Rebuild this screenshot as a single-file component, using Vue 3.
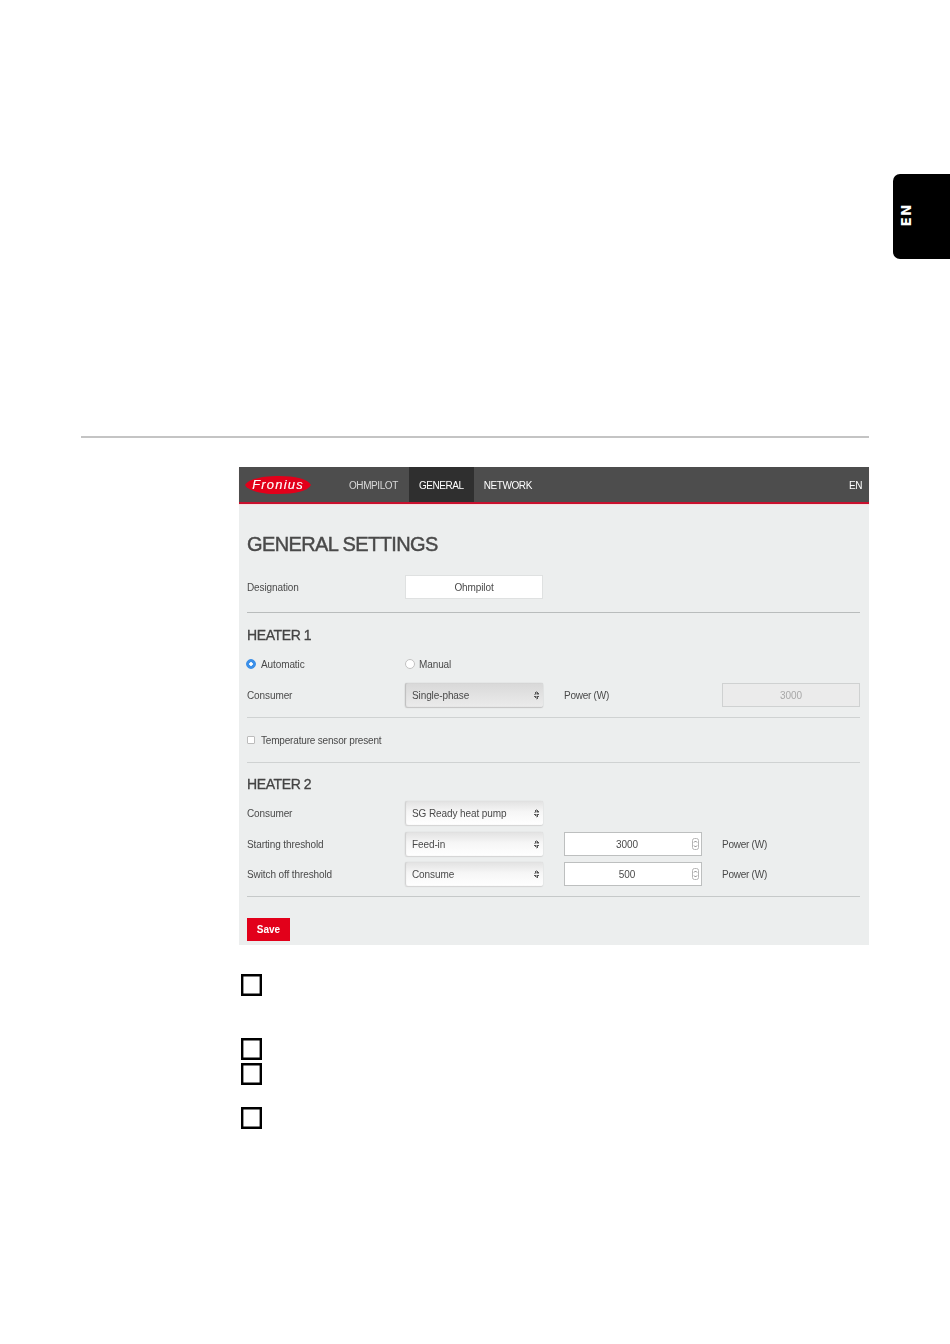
<script setup>
const steps = [
  { id: 1, gap: 42.5 },
  { id: 2, gap: 3.5 },
  { id: 3, gap: 22.5 },
  { id: 4, gap: 0 },
]
</script>

<template>
  <div class="page">
    <div class="lang-tab"><span>EN</span></div>
    <hr class="rule" />
    <section class="shot">
      <header class="nav">
        <svg class="logo" width="66" height="18" viewBox="0 0 66 18">
          <path d="M0 9C3 3 18 0 34 0C50 0 63 3 66 9C63 15 50 18 33 18C17 18 3 15 0 9Z" fill="#e2001a" />
          <text x="33" y="13" text-anchor="middle" fill="#fff" stroke="#fff" stroke-width="0.15" font-family="Liberation Sans, sans-serif" font-size="13" font-style="italic" letter-spacing="1.2">Fronius</text>
        </svg>
        <a class="tab first">OHMPILOT</a>
        <a class="tab active">GENERAL</a>
        <a class="tab">NETWORK</a>
        <span class="lang">EN</span>
      </header>
      <div class="body">
        <h1>GENERAL SETTINGS</h1>
        <div class="row designation">
          <label>Designation</label>
          <div class="input">Ohmpilot</div>
        </div>
        <div class="line l1"></div>
        <h2 class="h-one">HEATER 1</h2>
        <div class="row radios">
          <label class="opt"><i class="radio on"></i>Automatic</label>
          <label class="opt"><i class="radio"></i>Manual</label>
        </div>
        <div class="row consumer">
          <label>Consumer</label>
          <div class="select dark">Single-phase<i class="arrows"></i></div>
          <label class="unit">Power (W)</label>
          <div class="input disabled">3000</div>
        </div>
        <div class="line l2"></div>
        <label class="opt check-row"><i class="check"></i>Temperature sensor present</label>
        <div class="line l3"></div>
        <h2 class="h-two">HEATER 2</h2>
        <div class="row r1">
          <label>Consumer</label>
          <div class="select">SG Ready heat pump<i class="arrows"></i></div>
        </div>
        <div class="row r2">
          <label>Starting threshold</label>
          <div class="select">Feed-in<i class="arrows"></i></div>
          <div class="input num">
            3000
            <svg class="spin" width="7" height="12" viewBox="0 0 7 12">
              <rect x="0.5" y="0.5" width="6" height="11" rx="2" fill="#fff" stroke="#b5b5b5" />
              <path d="M2 4.5L3.5 3L5 4.5M2 7.5L3.5 9L5 7.5" fill="none" stroke="#666" stroke-width="0.8" />
            </svg>
          </div>
          <label class="unit">Power (W)</label>
        </div>
        <div class="row r3">
          <label>Switch off threshold</label>
          <div class="select">Consume<i class="arrows"></i></div>
          <div class="input num">
            500
            <svg class="spin" width="7" height="12" viewBox="0 0 7 12">
              <rect x="0.5" y="0.5" width="6" height="11" rx="2" fill="#fff" stroke="#b5b5b5" />
              <path d="M2 4.5L3.5 3L5 4.5M2 7.5L3.5 9L5 7.5" fill="none" stroke="#666" stroke-width="0.8" />
            </svg>
          </div>
          <label class="unit">Power (W)</label>
        </div>
        <div class="line l4"></div>
        <button class="save">Save</button>
      </div>
    </section>
    <div class="steps">
      <div v-for="s in steps" :key="s.id" class="step" :style="{ marginBottom: s.gap + 'px' }"></div>
    </div>
  </div>
</template>

<style>
html, body { margin: 0; background: #fff; }
</style>

<style scoped>
.page {
  position: relative;
  width: 950px;
  height: 1344px;
  overflow: hidden;
  background: #fff;
  font-family: "Liberation Sans", Arial, sans-serif;
  padding-top: 436px;
  box-sizing: border-box;
}
.lang-tab {
  position: absolute;
  left: 893px;
  top: 174px;
  width: 57px;
  height: 85px;
  background: #000;
  border-radius: 7px 0 0 7px;
}
.lang-tab span {
  position: absolute;
  left: 13px;
  top: 41px;
  width: 0;
  height: 0;
  display: flex;
  align-items: center;
  justify-content: center;
  transform: rotate(-90deg);
  color: #fff;
  font-family: "DejaVu Sans", sans-serif;
  font-weight: 700;
  font-size: 13.7px;
  letter-spacing: 1px;
  white-space: nowrap;
}
.rule {
  margin: 0 81px;
  border: 0;
  height: 2px;
  background: #c4c4c4;
}
.shot {
  margin: 29px 0 0 239px;
  width: 630px;
  height: 478px;
  background: #eceeee;
  color: #4a4a4a;
  font-size: 10px;
  letter-spacing: -0.1px;
  filter: blur(0.3px);
}
.nav {
  height: 35px;
  display: flex;
  align-items: stretch;
  background: #4d4d4d;
  border-bottom: 2px solid #c8102e;
  box-shadow: 0 1px 1px #f5dede;
  letter-spacing: -0.42px;
}
.logo {
  align-self: center;
  margin-left: 6px;
  margin-top: 1px;
  flex: none;
}
.tab {
  display: flex;
  align-items: center;
  padding: 1px 10px 0;
  color: #fff;
}
.tab.first {
  margin-left: 28px;
  color: #d8d8d8;
  padding-right: 11px;
}
.tab.active {
  background: #2f2f2f;
}
.lang {
  margin-left: auto;
  margin-right: 7px;
  margin-top: 1px;
  align-self: center;
  color: #fff;
}
.body {
  padding: 0 9px 0 8px;
}
h1 {
  margin: 0;
  padding-top: 28px;
  height: 40px;
  line-height: 24px;
  box-sizing: content-box;
  font-size: 20px;
  font-weight: 400;
  -webkit-text-stroke: 0.45px #4a4a4a;
  color: #4a4a4a;
  letter-spacing: -0.6px;
}
h2 {
  margin: 0;
  font-size: 14px;
  line-height: 18px;
  font-weight: 400;
  -webkit-text-stroke: 0.3px #444;
  color: #444;
  letter-spacing: -0.4px;
}
.row {
  display: grid;
  grid-template-columns: 158px 159px 158px 138px;
  align-items: center;
}
.opt {
  display: flex;
  align-items: center;
}
.unit {
  letter-spacing: -0.25px;
}
.designation { height: 24px; margin-top: 3px; }
.line {
  height: 1px;
  background: #b9bcbc;
}
.l1 { margin-top: 13px; }
.h-one { margin-top: 13px; }
.radios { margin-top: 13px; height: 14px; }
.consumer { margin-top: 12px; height: 24px; }
.l2 { margin-top: 10px; background: #cfd2d2; }
.check-row { margin-top: 15px; height: 14px; letter-spacing: -0.18px; }
.l3 { margin-top: 15px; background: #cfd2d2; }
.h-two { margin-top: 12px; }
.r1 { margin-top: 8px; height: 24px; }
.r2 { margin-top: 7px; height: 24px; }
.r3 { margin-top: 6px; height: 24px; }
.l4 { margin-top: 10px; background: #c6c9c9; }
.input {
  width: 138px;
  height: 24px;
  box-sizing: border-box;
  background: #fff;
  border: 1px solid #dfe1e1;
  display: flex;
  align-items: center;
  justify-content: center;
  position: relative;
}
.input.disabled {
  background: #ebebeb;
  border-color: #cfd1d1;
  color: #a8a8a8;
}
.input.num {
  border-color: #bdbfbf;
  padding-right: 12px;
}
.select {
  width: 138px;
  height: 24px;
  box-sizing: border-box;
  padding-left: 7px;
  display: flex;
  align-items: center;
  position: relative;
  border-radius: 2px;
  background: linear-gradient(#e2e2e2, #f6f6f6 45%, #fff);
  box-shadow: inset 1px 0 1px #cfcfcf, 0 1px 1px #d4d4d4, 0 0 1px #c4c4c4;
}
.select.dark {
  background: linear-gradient(#d8d8d8, #e2e2e2 50%, #ebebeb);
  box-shadow: inset 1px 0 1px #bdbdbd, 0 1px 1px #c4c4c4, 0 0 1px #aaa;
}
.arrows {
  position: absolute;
  right: 4px;
  top: 8px;
  width: 5px;
  height: 9px;
  background:
    linear-gradient(to bottom right, transparent 50%, #555 50%) 0 0 / 2.5px 3.5px no-repeat,
    linear-gradient(to bottom left, transparent 50%, #555 50%) 2.5px 0 / 2.5px 3.5px no-repeat,
    linear-gradient(to top right, transparent 50%, #555 50%) 0 5px / 2.5px 3.5px no-repeat,
    linear-gradient(to top left, transparent 50%, #555 50%) 2.5px 5px / 2.5px 3.5px no-repeat;
}
.spin {
  position: absolute;
  right: 2px;
  top: 5px;
}
.radio {
  display: block;
  width: 10px;
  height: 10px;
  box-sizing: border-box;
  border-radius: 50%;
  background: #fff;
  border: 1px solid #c2c2c2;
  margin-right: 4px;
}
.radio.on {
  margin-left: -1px;
  background: radial-gradient(circle, #fff 0 1.5px, #3b8fe8 2px);
  border-color: #3b8fe8;
  margin-right: 5px;
}
.check {
  display: block;
  width: 8px;
  height: 8px;
  box-sizing: border-box;
  background: #fff;
  border: 1px solid #bcbcbc;
  border-radius: 1px;
  margin-right: 6px;
}
.save {
  display: block;
  margin-top: 21px;
  width: 43px;
  height: 23px;
  padding: 0;
  border: 0;
  background: #e2001a;
  color: #fff;
  font: 700 10px "Liberation Sans", Arial, sans-serif;
}
.steps {
  margin: 29px 0 0 240.5px;
}
.step {
  width: 21.5px;
  height: 21.5px;
  box-sizing: border-box;
  box-shadow: inset 0 0 0 2.4px #000;
}
</style>
